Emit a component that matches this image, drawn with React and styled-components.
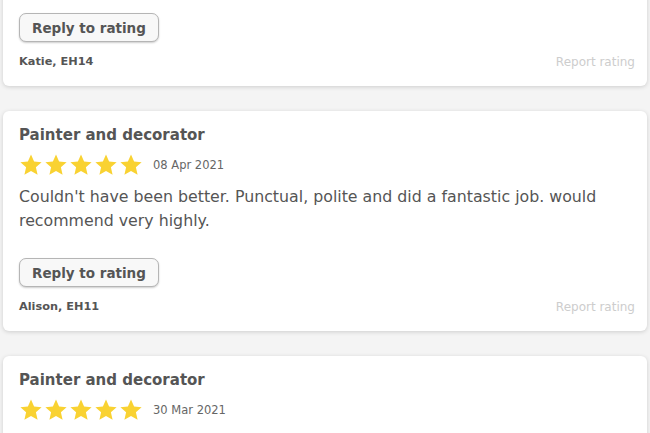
import React from "react";
import styled, { createGlobalStyle } from "styled-components";

const Global = createGlobalStyle`
  html, body { margin: 0; padding: 0; background: #f4f4f4; }
  body { font-family: "DejaVu Sans", "Open Sans", sans-serif; overflow: hidden; }
`;

const Page = styled.div`
  display: flex;
  flex-direction: column;
  gap: 25px;
  padding: 0 3px;
  margin-top: -134px;
`;

const Card = styled.div`
  background: #fff;
  border-radius: 6px;
  box-shadow: 0 1px 4px rgba(0, 0, 0, 0.16);
  padding: 13px 12px 16px 16px;
  display: flex;
  flex-direction: column;
  height: 220px;
  box-sizing: border-box;
`;

const Title = styled.div`
  font-size: 15px;
  font-weight: 700;
  color: #555;
  line-height: 22px;
`;

const StarRow = styled.div`
  display: flex;
  align-items: center;
  margin-top: 7px;
  height: 24px;
`;

const Stars = styled.div`
  display: flex;
  gap: 1px;
`;

const DateText = styled.span`
  font-size: 11.5px;
  color: #666;
  margin-left: 10px;
`;

const Body = styled.p`
  margin: 8px 0 0;
  font-size: 15.8px;
  line-height: 24px;
  color: #555;
  max-width: 612px;
  min-height: 48px;
`;

const ReplyButton = styled.button`
  align-self: flex-start;
  margin-top: 25px;
  height: 30px;
  padding: 0 12px;
  border: 1px solid #b5b5b5;
  border-radius: 7px;
  background: #f8f8f8;
  box-shadow: 0 1px 2px rgba(0, 0, 0, 0.2);
  font-family: inherit;
  font-size: 13.5px;
  font-weight: 700;
  color: #555;
`;

const Footer = styled.div`
  display: flex;
  justify-content: space-between;
  align-items: center;
  margin-top: 12px;
  line-height: 16px;
`;

const Name = styled.span`
  font-size: 11.3px;
  font-weight: 700;
  color: #555;
`;

const Report = styled.span`
  font-size: 12px;
  color: #cdcdcd;
`;

const Star = () => (
  <svg width="24" height="24" viewBox="0 0 24 24">
    <path
      d="M12 1.6l3.1 7 7.5.7-5.7 5 1.7 7.5L12 17.9l-6.6 3.9 1.7-7.5-5.7-5 7.5-.7z"
      fill="#f9d232"
    />
  </svg>
);

const reviews = [
  {
    title: "Painter and decorator",
    date: "10 Apr 2021",
    text: "",
    name: "Katie, EH14",
  },
  {
    title: "Painter and decorator",
    date: "08 Apr 2021",
    text:
      "Couldn't have been better. Punctual, polite and did a fantastic job. would recommend very highly.",
    name: "Alison, EH11",
  },
  {
    title: "Painter and decorator",
    date: "30 Mar 2021",
    text: "",
    name: "Mark, EH10",
  },
];

export default function App() {
  return (
    <>
      <Global />
      <Page>
        {reviews.map((r, i) => (
          <Card key={i}>
            <Title>{r.title}</Title>
            <StarRow>
              <Stars>
                {[0, 1, 2, 3, 4].map((s) => (
                  <Star key={s} />
                ))}
              </Stars>
              <DateText>{r.date}</DateText>
            </StarRow>
            <Body>{r.text}</Body>
            <ReplyButton>Reply to rating</ReplyButton>
            <Footer>
              <Name>{r.name}</Name>
              <Report>Report rating</Report>
            </Footer>
          </Card>
        ))}
      </Page>
    </>
  );
}
